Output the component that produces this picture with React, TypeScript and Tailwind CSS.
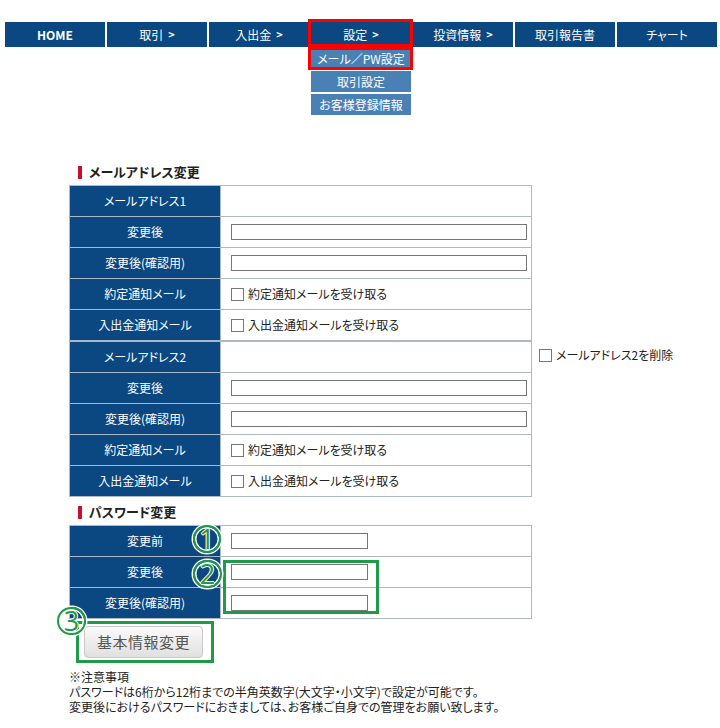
import React from 'react';

const navItems = [
  { label: 'HOME', bold: true },
  { label: '取引', arrow: true },
  { label: '入出金', arrow: true },
  { label: '設定', arrow: true, active: true },
  { label: '投資情報', arrow: true },
  { label: '取引報告書' },
  { label: 'チャート' },
];

const subMenu = ['メール／PW設定', '取引設定', 'お客様登録情報'];

type Row = { label: string; kind: 'empty' | 'input' | 'check' | 'short'; text?: string };

const mail1: Row[] = [
  { label: 'メールアドレス1', kind: 'empty' },
  { label: '変更後', kind: 'input' },
  { label: '変更後(確認用)', kind: 'input' },
  { label: '約定通知メール', kind: 'check', text: '約定通知メールを受け取る' },
  { label: '入出金通知メール', kind: 'check', text: '入出金通知メールを受け取る' },
];

const mail2: Row[] = [
  { label: 'メールアドレス2', kind: 'empty' },
  { label: '変更後', kind: 'input' },
  { label: '変更後(確認用)', kind: 'input' },
  { label: '約定通知メール', kind: 'check', text: '約定通知メールを受け取る' },
  { label: '入出金通知メール', kind: 'check', text: '入出金通知メールを受け取る' },
];

const password: Row[] = [
  { label: '変更前', kind: 'short' },
  { label: '変更後', kind: 'short' },
  { label: '変更後(確認用)', kind: 'short' },
];

function CheckBox() {
  return <span className="inline-block w-[13px] h-[13px] border border-[#777] bg-white shrink-0" />;
}

function SectionTitle({ children }: { children: React.ReactNode }) {
  return (
    <div className="flex items-center h-[16px] pl-[9px] gap-[7px]">
      <span className="w-[4px] h-[13px] bg-[#c8102e]" />
      <span className="text-[13px] font-bold text-[#222] leading-[16px]">{children}</span>
    </div>
  );
}

function FormTable({ rows }: { rows: Row[] }) {
  return (
    <div className="w-[463px] border-t border-x border-[#abb8c5]">
      {rows.map((row, i) => (
        <div key={i} className="flex h-[31px] border-b border-[#abb8c5]">
          <div className="w-[151px] shrink-0 border-r border-[#abb8c5] bg-[#0b4780] text-white text-[12px] flex items-center justify-center">
            {row.label}
          </div>
          <div className="flex-1 flex items-center pl-[10px] text-[12px] text-[#222]">
            {row.kind === 'input' && (
              <span className="block w-[296px] h-[16px] border border-[#767676] bg-white" />
            )}
            {row.kind === 'short' && (
              <span className="block w-[137px] h-[16px] border border-[#767676] bg-white" />
            )}
            {row.kind === 'check' && (
              <span className="flex items-center gap-[4px]">
                <CheckBox />
                {row.text}
              </span>
            )}
          </div>
        </div>
      ))}
    </div>
  );
}

// green numbered circle laid over the form
function Num({ n, className }: { n: string; className: string }) {
  return (
    <div
      className={`absolute rounded-full border-[2px] border-[#1e9a48] shadow-[0_0_0_1.5px_white,inset_0_0_0_1.5px_white] flex items-center justify-center text-[#1e9a48] text-[27px] font-['Open_Sans',sans-serif] font-normal leading-none [text-shadow:1px_0_0_white,-1px_0_0_white,0_1px_0_white,0_-1px_0_white] ${className}`}
    >
      <span className="-mt-[1px]">{n}</span>
    </div>
  );
}

export default function App() {
  return (
    <div className="w-[720px] h-[728px] bg-white pt-[22px] font-['Noto_Sans_CJK_JP',sans-serif] [font-feature-settings:'palt'] overflow-hidden">
      <nav className="flex gap-[2px] ml-[5px]">
        {navItems.map((item) => (
          <div
            key={item.label}
            className="relative w-[100px] h-[25px] bg-[#0b4780] text-white text-[12px] flex items-center justify-center"
          >
            <span className={item.bold ? 'font-bold' : ''}>{item.label}</span>
            {item.arrow && <span className="ml-[5px] text-[11px] font-bold">&gt;</span>}
            {item.active && (
              <>
                <div className="absolute left-0 top-[26px] w-[100px] flex flex-col gap-[2px] z-10">
                  {subMenu.map((s) => (
                    <div
                      key={s}
                      className="h-[21px] bg-[#4a81b5] text-white text-[12px] flex items-center justify-center"
                    >
                      {s}
                    </div>
                  ))}
                </div>
                <div className="absolute -left-[3px] -top-[3px] w-[105px] h-[28px] border-[3px] border-[#ff0000] z-20" />
                <div className="absolute -left-[3px] top-[25px] w-[105px] h-[23px] border-[3px] border-[#ff0000] z-20" />
              </>
            )}
          </div>
        ))}
      </nav>

      <main className="ml-[69px] mt-[117px]">
        <SectionTitle>メールアドレス変更</SectionTitle>
        <div className="mt-[5px]">
          <FormTable rows={mail1} />
        </div>
        <div className="flex items-start">
          <FormTable rows={mail2} />
          <label className="ml-[7px] mt-[7px] flex items-center gap-[4px] text-[12px] text-[#222] h-[14px]">
            <CheckBox />
            メールアドレス2を削除
          </label>
        </div>

        <div className="mt-[7px]">
          <SectionTitle>パスワード変更</SectionTitle>
        </div>
        <div className="relative mt-[5px]">
          <FormTable rows={password} />
          <button className="mt-[7px] ml-[15px] w-[119px] h-[32px] rounded-[4px] border border-[#c8c8c8] bg-gradient-to-b from-[#fafafa] to-[#e0e0e0] text-[15px] text-[#555] tracking-[0.5px]">
            基本情報変更
          </button>

          <div className="absolute left-[154px] top-[35px] w-[156px] h-[54px] border-[3px] border-[#1e9a48]" />
          <div className="absolute left-[7px] top-[96px] w-[138px] h-[42px] border-[3px] border-[#1e9a48]" />
          <Num n="1" className="left-[124px] top-0 w-[28px] h-[28px]" />
          <Num n="2" className="left-[124px] top-[35px] w-[29px] h-[28px]" />
          <Num n="3" className="-left-[12px] top-[82px] w-[29px] h-[28px]" />
        </div>

        <div className="mt-[11px] text-[12px] leading-[15px] text-[#222]">
          <p>※注意事項</p>
          <p>パスワードは6桁から12桁までの半角英数字(大文字・小文字)で設定が可能です。</p>
          <p>変更後におけるパスワードにおきましては、お客様ご自身での管理をお願い致します。</p>
        </div>
      </main>
    </div>
  );
}
